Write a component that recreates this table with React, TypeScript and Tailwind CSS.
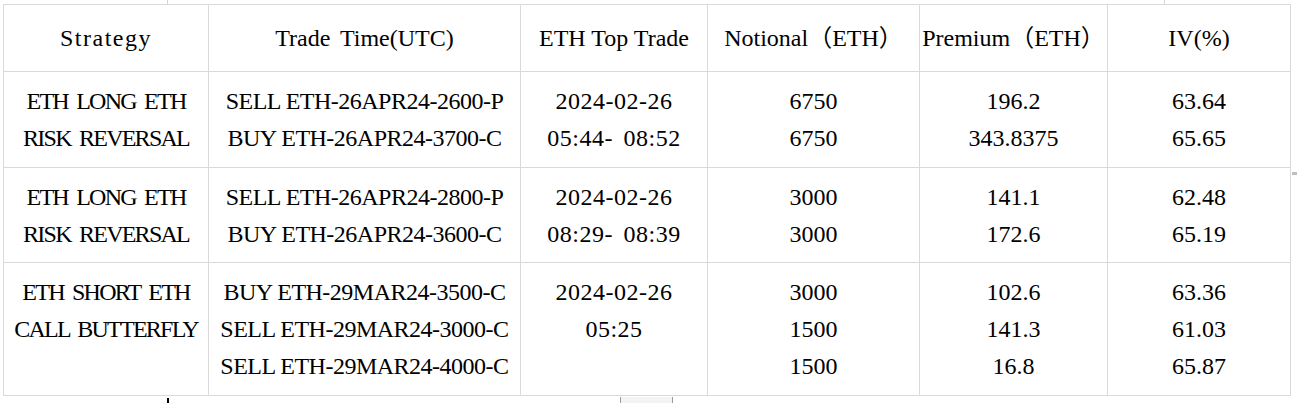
import type { ReactNode } from 'react';

const headers = ['Strategy', 'Trade Time(UTC)', 'ETH Top Trade', 'Notional（ETH）', 'Premium（ETH）', 'IV(%)'];
const headerSpacing = ['tracking-[1.5px]', '[word-spacing:4px]', '', '', '', ''];

// the source used a monospace CJK face; squeeze/stretch a little per column to keep its widths
const colSpacing = [
  'tracking-[-1.75px] [word-spacing:4px]',
  'tracking-[-0.5px]',
  'tracking-[0.5px] [word-spacing:4px]',
  '',
  '',
  ''
];

const rows: string[][][] = [
  [
    ['ETH LONG ETH', 'RISK REVERSAL'],
    ['SELL ETH-26APR24-2600-P', 'BUY ETH-26APR24-3700-C'],
    ['2024-02-26', '05:44- 08:52'],
    ['6750', '6750'],
    ['196.2', '343.8375'],
    ['63.64', '65.65']
  ],
  [
    ['ETH LONG ETH', 'RISK REVERSAL'],
    ['SELL ETH-26APR24-2800-P', 'BUY ETH-26APR24-3600-C'],
    ['2024-02-26', '08:29- 08:39'],
    ['3000', '3000'],
    ['141.1', '172.6'],
    ['62.48', '65.19']
  ],
  [
    ['ETH SHORT ETH', 'CALL BUTTERFLY'],
    ['BUY ETH-29MAR24-3500-C', 'SELL ETH-29MAR24-3000-C', 'SELL ETH-29MAR24-4000-C'],
    ['2024-02-26', '05:25'],
    ['3000', '1500', '1500'],
    ['102.6', '141.3', '16.8'],
    ['63.36', '61.03', '65.87']
  ]
];

function Cell({ children, className = '' }: { children: ReactNode; className?: string }) {
  return (
    <div className={`bg-white flex flex-col items-center text-center leading-[37px] whitespace-pre ${className}`}>
      {children}
    </div>
  );
}

export default function App() {
  return (
    <div
      className="relative w-[1297px] h-[403px] bg-white overflow-hidden pl-[3px] pt-[4px] text-[24px] text-black"
      style={{ fontFamily: '"Liberation Serif", "Noto Sans CJK SC", serif' }}
    >
      {/* spreadsheet bits peeking around the pasted table */}
      <div className="absolute left-[167px] top-0 w-px h-[4px] bg-[#d4d4d4]" />
      <div className="absolute left-[1164px] top-0 w-px h-[4px] bg-[#d4d4d4]" />

      <div className="grid w-fit grid-cols-[204px_311px_186px_211px_187px_182px] grid-rows-[66px_95px_94px_132px] gap-px p-px bg-[#d9d9d9]">
        {headers.map((h, j) => (
          <Cell key={h} className={`justify-center ${headerSpacing[j]}`}>
            {h}
          </Cell>
        ))}
        {rows.map((row, i) =>
          row.map((lines, j) => (
            <Cell key={`${i}-${j}`} className={`justify-start pt-[11px] ${colSpacing[j]}`}>
              {lines.map((line) => (
                <span key={line}>{line}</span>
              ))}
            </Cell>
          ))
        )}
      </div>

      <div className="absolute left-[167px] top-[398px] w-[2px] h-[5px] bg-black" />
      <div className="absolute left-[620px] top-[397px] w-[53px] h-[6px] bg-[#f3f3f3] border-x border-[#9a9a9a]" />
      <div className="absolute left-[1292px] top-[172px] w-[5px] h-[3px] bg-[#bdbdbd]" />
    </div>
  );
}
